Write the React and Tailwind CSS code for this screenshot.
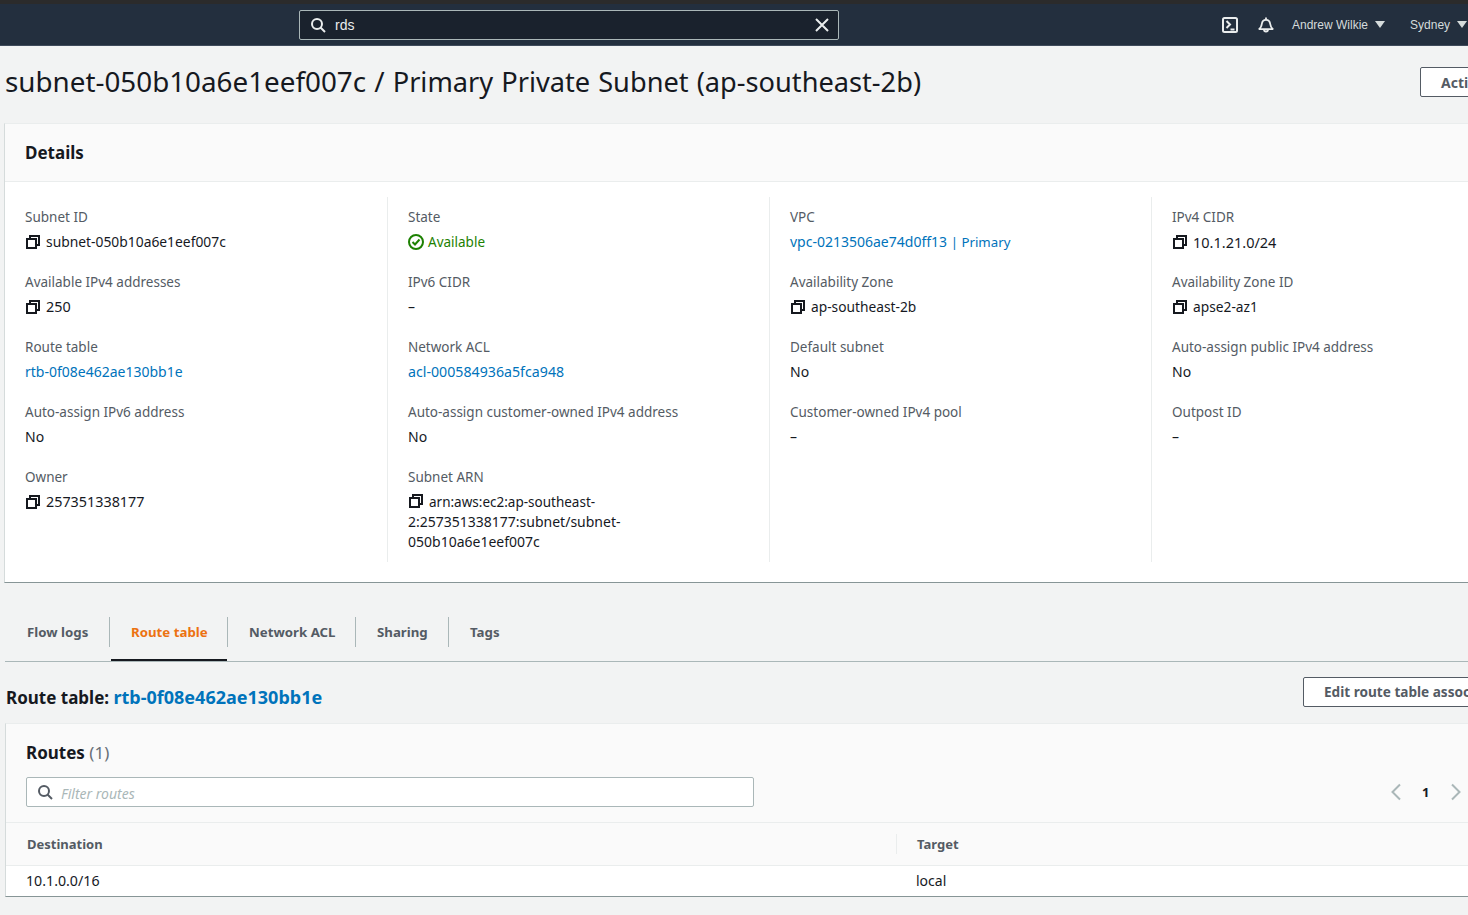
function CopyIcon() {
  return (
    <svg width="16" height="16" viewBox="0 0 16 16" fill="none" stroke="#16191f" strokeWidth="2" className="shrink-0">
      <rect x="2" y="5" width="9" height="9" />
      <path d="M5 4V2h9v9h-2" />
    </svg>
  );
}

function SearchIcon({ color }) {
  return (
    <svg width="16" height="16" viewBox="0 0 16 16" fill="none" stroke={color} strokeWidth="2" className="shrink-0">
      <circle cx="7" cy="7" r="5" />
      <path d="M10.500 10.500L15 15" />
    </svg>
  );
}

function Field({ label, children }) {
  return (
    <div className="mb-[20px]">
      <div className="text-[13.5px] text-[#545b64] leading-5">{label}</div>
      <div className="mt-[5px] leading-5 text-[#16191f]">{children}</div>
    </div>
  );
}

function Copy({ children, size = 'text-[13.75px]' }) {
  return (
    <div className={`flex items-center gap-[5px] ${size}`}>
      <CopyIcon />
      <span>{children}</span>
    </div>
  );
}

function Link({ children }) {
  return <span className="text-[#0073bb]">{children}</span>;
}

const dash = '–';

const columns = [
  [
    ['Subnet ID', <Copy size="text-[13.85px]">subnet-050b10a6e1eef007c</Copy>],
    ['Available IPv4 addresses', <Copy size="text-[14.4px]">250</Copy>],
    ['Route table', <Link>rtb-0f08e462ae130bb1e</Link>],
    ['Auto-assign IPv6 address', 'No'],
    ['Owner', <Copy size="text-[14.35px]">257351338177</Copy>],
  ],
  [
    ['State', (
      <div className="flex items-center gap-1 text-[13.5px] text-[#1d8102]">
        <svg width="16" height="16" viewBox="0 0 16 16" fill="none" stroke="#1d8102" strokeWidth="2" className="shrink-0">
          <circle cx="8" cy="8" r="7" />
          <path d="M4.500 8l2.500 2.500L11.500 5.500" />
        </svg>
        <span>Available</span>
      </div>
    )],
    ['IPv6 CIDR', dash],
    ['Network ACL', <span className="text-[14.2px]"><Link>acl-000584936a5fca948</Link></span>],
    ['Auto-assign customer-owned IPv4 address', 'No'],
    ['Subnet ARN', (
      <div className="w-[230px] text-[14px]">
        <span className="inline-block align-[-2px] mr-[5px]"><CopyIcon /></span>
        <span className="text-[13.5px]">arn:aws:ec2:ap-southeast-</span>2:257351338177:subnet/subnet-050b10a6e1eef007c
      </div>
    )],
  ],
  [
    ['VPC', (
      <Link>
        <span>vpc-0213506ae74d0ff13</span> <span className="text-[13.25px]">| Primary</span>
      </Link>
    )],
    ['Availability Zone', <Copy>ap-southeast-2b</Copy>],
    ['Default subnet', 'No'],
    ['Customer-owned IPv4 pool', dash],
  ],
  [
    ['IPv4 CIDR', <Copy size="text-[14.5px]">10.1.21.0/24</Copy>],
    ['Availability Zone ID', <Copy>apse2-az1</Copy>],
    ['Auto-assign public IPv4 address', 'No'],
    ['Outpost ID', dash],
  ],
];

const tabs = [
  { label: 'Flow logs', box: 'w-[105px] pl-[22px]' },
  { label: 'Route table', box: 'w-[118px] pl-[21px]' },
  { label: 'Network ACL', box: 'w-[128px] pl-[21px]' },
  { label: 'Sharing', box: 'w-[93px] pl-[21px]' },
  { label: 'Tags', box: 'w-[93px] pl-[21px]' },
];

export default function App() {
  return (
    <div className="h-[915px] w-[1468px] overflow-hidden bg-[#f2f3f3] text-[14px] text-[#16191f] font-['Noto_Sans',sans-serif]">
      {/* Top bar */}
      <div className="h-[4px] bg-[#2b2b2b]" />
      <header className="h-[42px] bg-[#232f3e] border-b border-[#3f4b5b] flex items-center font-['Liberation_Sans',sans-serif] text-white">
        <div className="ml-[299px] w-[540px] h-[30px] rounded-[2px] border border-[#aab7b8] bg-[#1a222d] flex items-center pl-[10px] pr-[9px]">
          <SearchIcon color="#eaeded" />
          <span className="ml-[9px] text-[14px] leading-5 pt-px text-[#eaeded]">rds</span>
          <svg width="14" height="14" viewBox="0 0 14 14" fill="none" stroke="#eaeded" strokeWidth="2" className="ml-auto">
            <path d="M1 1l12 12M13 1L1 13" />
          </svg>
        </div>
        <div className="ml-auto flex items-center text-[12px] text-[#d5dbdb] whitespace-nowrap w-[246px] shrink-0">
          <svg width="16" height="16" viewBox="0 0 16 16" fill="none" stroke="#eaeded" strokeWidth="2">
            <rect x="1" y="1" width="14" height="14" rx="1.500" />
            <path d="M4.500 4l3.500 3.500L4.500 11M8.500 12.500h4" />
          </svg>
          <svg width="16" height="16" viewBox="0 0 16 16" fill="none" stroke="#eaeded" strokeWidth="1.800" className="ml-[20px]">
            <path d="M.8 12.200c2.200-1.200 2.700-3 3-5.200C4.100 4.500 5.500 2.800 8 2.800s3.900 1.700 4.200 4.200c.3 2.200.8 4 3 5.200z" />
            <path d="M8 .5v2.300M6 12.500a2 2 0 0 0 4 0" />
          </svg>
          <span className="ml-[18px]">Andrew Wilkie</span>
          <span className="ml-[7px] w-0 h-0 border-x-[5px] border-x-transparent border-t-[7px] border-t-[#d5dbdb]" />
          <span className="ml-[25px]">Sydney</span>
          <span className="ml-[7px] w-0 h-0 border-x-[5px] border-x-transparent border-t-[7px] border-t-[#d5dbdb]" />
        </div>
      </header>

      {/* Title row */}
      <div className="h-[77px] flex items-start pl-[5px] whitespace-nowrap">
        <h1 className="mt-[17px] text-[27.2px] leading-9 font-normal [word-spacing:1px]">
          <span className="text-[27.8px]">subnet-050b10a6e1eef007c /</span> Primary Private Subnet (ap-southeast-2b)
        </h1>
        <button className="ml-auto -mr-[80px] w-[128px] h-[30px] shrink-0 mt-[21px] rounded-[2px] border border-[#545b64] bg-white text-left pl-[20px] font-bold text-[#545b64]">
          Actions
        </button>
      </div>

      {/* Details */}
      <section className="ml-[4px] w-[1546px] h-[460px] bg-white border-t border-[#eaeded] border-l border-l-[#d5dbdb] border-b border-b-[#879596] flex flex-col">
        <div className="h-[58px] shrink-0 bg-[#fafafa] border-b border-[#eaeded] flex items-center pl-[20px]">
          <h2 className="text-[17px] font-bold leading-6">Details</h2>
        </div>
        <div className="grid grid-cols-[383px_382px_382px_382px] pt-[15px]">
          {columns.map((col, i) => (
            <div key={i} className={`h-[365px] pt-[10px] pl-[20px] ${i < 3 ? 'border-r border-[#eaeded]' : ''}`}>
              {col.map(([label, value]) => (
                <Field key={label} label={label}>{value}</Field>
              ))}
            </div>
          ))}
        </div>
      </section>

      {/* Tabs */}
      <nav className="ml-[5px] mt-[34px] h-[45px] w-[1546px] border-b border-[#aab7b8] flex items-start">
        {tabs.map((tab, i) => (
          <div key={tab.label} className="relative h-[44px] flex items-start">
            <div className={`h-[30px] flex items-center font-bold text-[13.25px] pt-px ${tab.box} ${i < 4 ? 'border-r border-[#aab7b8]' : ''} ${i === 1 ? 'text-[#ec7211]' : 'text-[#545b64]'}`}>
              {tab.label}
            </div>
            {i === 1 && <div className="absolute left-[1px] right-[1px] bottom-0 h-[2px] bg-[#16191f]" />}
          </div>
        ))}
      </nav>

      {/* Route table heading */}
      <div className="h-[61px] flex items-start pl-[6px] whitespace-nowrap">
        <h2 className="mt-[23px] text-[17px] font-bold leading-6">
          Route table: <span className="text-[18px] text-[#0073bb]">rtb-0f08e462ae130bb1e</span>
        </h2>
        <button className="ml-auto -mr-[100px] w-[265px] h-[30px] shrink-0 mt-[15px] rounded-[2px] border border-[#545b64] bg-white text-left pl-[20px] font-bold text-[13.6px] text-[#545b64]">
          Edit route table association
        </button>
      </div>

      {/* Routes */}
      <section className="ml-[5px] w-[1546px] h-[174px] bg-white border-t border-[#eaeded] border-l border-l-[#d5dbdb] border-b border-b-[#879596] flex flex-col">
        <div className="h-[99px] shrink-0 bg-[#fafafa] border-b border-[#eaeded] pl-[20px]">
          <h2 className="pt-[17px] text-[17px] leading-6 font-bold">
            Routes <span className="font-normal text-[#687078]">(1)</span>
          </h2>
          <div className="mt-[12px] flex items-center">
            <div className="w-[728px] h-[30px] rounded-[2px] border border-[#aab7b8] bg-white flex items-center pl-[10px]">
              <SearchIcon color="#545b64" />
              <span className="ml-[8px] pt-[2px] italic text-[14px] text-[#aab7b8]">Filter routes</span>
            </div>
            <div className="ml-[636px] flex items-center">
              <svg width="12" height="18" viewBox="0 0 12 18" fill="none" stroke="#aab7b8" strokeWidth="2">
                <path d="M10 1.500L2.500 9l7.500 7.500" />
              </svg>
              <span className="ml-[20px] w-[8px] pt-px text-[13px] font-bold">1</span>
              <svg width="12" height="18" viewBox="0 0 12 18" fill="none" stroke="#aab7b8" strokeWidth="2" className="ml-[20px]">
                <path d="M2 1.500L9.500 9 2 16.500" />
              </svg>
            </div>
          </div>
        </div>
        <div className="h-[43px] shrink-0 bg-[#fafafa] border-b border-[#eaeded] flex items-center font-bold text-[13px] text-[#545b64]">
          <div className="w-[891px] pl-[21px] border-r border-[#eaeded] leading-5">Destination</div>
          <div className="pl-[20px] pt-px">Target</div>
        </div>
        <div className="flex items-center h-[30px] pb-[1px]">
          <div className="w-[891px] pl-[20px] text-[14.2px]">10.1.0.0/16</div>
          <div className="pl-[19px]">local</div>
        </div>
      </section>
    </div>
  );
}
